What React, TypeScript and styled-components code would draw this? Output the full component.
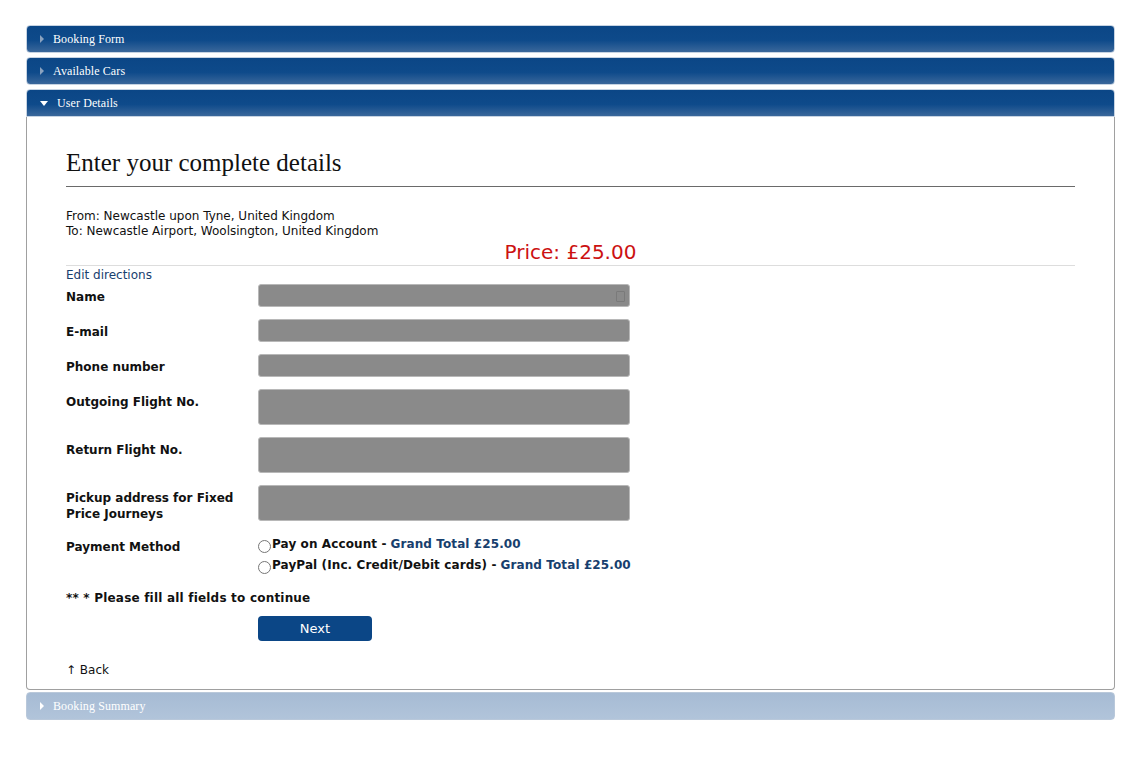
import styled, { createGlobalStyle } from "styled-components";

const GlobalStyle = createGlobalStyle`
  body {
    margin: 0;
    background: #ffffff;
    font-family: "DejaVu Sans", Verdana, sans-serif;
  }
`;

const Page = styled.div`
  padding: 25px 25px 0 26px;
  width: 1089px;
  display: flex;
  flex-direction: column;
`;

const Header = styled.div<{ $open?: boolean; $muted?: boolean }>`
  height: 28px;
  box-sizing: border-box;
  display: flex;
  align-items: center;
  gap: 9px;
  padding-left: 13px;
  margin-bottom: ${(p) => (p.$open ? "0" : "4px")};
  border-radius: ${(p) => (p.$open ? "4px 4px 0 0" : "4px")};
  border: 1px solid ${(p) => (p.$muted ? "#b9c8da" : "#c6d3e2")};
  background: ${(p) =>
    p.$muted
      ? "linear-gradient(#a6bbd4, #b1c4da)"
      : "linear-gradient(#0b4686 0%, #0e4a8a 55%, #3a679b 100%)"};
  color: #ffffff;
  font-family: "Liberation Serif", "Times New Roman", serif;
  font-size: 12px;
  letter-spacing: 0.1px;
`;

const Arrow = styled.span<{ $down?: boolean; $muted?: boolean }>`
  width: 0;
  height: 0;
  ${(p) =>
    p.$down
      ? `border-left: 4px solid transparent;
         border-right: 4px solid transparent;
         border-top: 5px solid #ffffff;`
      : `border-top: 4px solid transparent;
         border-bottom: 4px solid transparent;
         border-left: 4px solid ${p.$muted ? "#ffffff" : "#8aa2bf"};`}
`;

const Panel = styled.div`
  border: 1px solid #a0a0a0;
  border-top: none;
  border-radius: 0 0 4px 4px;
  padding: 30px 39px 11px 39px;
  margin-bottom: 2px;
`;

const Title = styled.h2`
  margin: 0;
  font-family: "Liberation Serif", "Times New Roman", serif;
  font-weight: normal;
  font-size: 25px;
  color: #111111;
  line-height: 32px;
  padding-bottom: 7px;
  border-bottom: 1px solid #6a6a6a;
`;

const Route = styled.div`
  margin-top: 22px;
  font-size: 12px;
  line-height: 15px;
  color: #111111;
`;

const Price = styled.div`
  text-align: center;
  color: #cc1111;
  font-size: 20px;
  line-height: 24px;
  padding-top: 1px;
  padding-bottom: 1px;
  border-bottom: 1px solid #dddddd;
`;

const Link = styled.a`
  display: block;
  color: #17406e;
  font-size: 12px;
  line-height: 16px;
  margin-top: 1px;
  text-decoration: none;
`;

const Form = styled.div`
  display: grid;
  grid-template-columns: 192px 372px;
  row-gap: 12px;
  margin-top: 1px;
`;

const Label = styled.div`
  font-size: 12px;
  font-weight: bold;
  line-height: 16px;
  color: #111111;
  padding-top: 5px;
`;

const Field = styled.div<{ $tall?: boolean }>`
  position: relative;
  height: ${(p) => (p.$tall ? "36px" : "23px")};
  box-sizing: border-box;
  width: 372px;
  background: #8a8a8a;
  border: 1px solid #b8b8b8;
  border-radius: 3px;
`;

const FieldIcon = styled.span`
  position: absolute;
  right: 4px;
  top: 6px;
  width: 7px;
  height: 9px;
  border: 1px solid #7a7a7a;
  border-radius: 1px;
`;

const Options = styled.div`
  display: flex;
  flex-direction: column;
  gap: 4px;
  padding-top: 2px;
`;

const Option = styled.label`
  display: flex;
  align-items: flex-end;
  white-space: nowrap;
  font-size: 12px;
  font-weight: bold;
  line-height: 17px;
  color: #111111;
  letter-spacing: 0.1px;
`;

const Radio = styled.input`
  flex: none;
  margin: 0 1px 0 0;
  width: 13px;
  height: 13px;
`;

const Total = styled.span`
  color: #17406e;
  margin-left: 4px;
`;

const Note = styled.div`
  grid-column: 1 / span 2;
  font-size: 12px;
  font-weight: bold;
  line-height: 16px;
  color: #111111;
  padding-top: 4px;
  letter-spacing: 0.2px;
`;

const NextButton = styled.button`
  grid-column: 2;
  width: 114px;
  height: 25px;
  margin-top: -2px;
  border: none;
  border-radius: 4px;
  background: #0b4686;
  color: #ffffff;
  font-family: "DejaVu Sans", Verdana, sans-serif;
  font-size: 13px;
`;

const Back = styled.div`
  margin-top: 21px;
  font-size: 12px;
  line-height: 16px;
  color: #111111;
`;

const sections = ["Booking Form", "Available Cars"];

const rows: { label: string; tall?: boolean; icon?: boolean }[] = [
  { label: "Name", icon: true },
  { label: "E-mail" },
  { label: "Phone number" },
  { label: "Outgoing Flight No.", tall: true },
  { label: "Return Flight No.", tall: true },
  { label: "Pickup address for Fixed Price Journeys", tall: true },
];

export default function App() {
  return (
    <>
      <GlobalStyle />
      <Page>
        {sections.map((s) => (
          <Header key={s}>
            <Arrow />
            {s}
          </Header>
        ))}
        <Header $open>
          <Arrow $down />
          User Details
        </Header>
        <Panel>
          <Title>Enter your complete details</Title>
          <Route>
            From: Newcastle upon Tyne, United Kingdom
            <br />
            To: Newcastle Airport, Woolsington, United Kingdom
          </Route>
          <Price>Price: £25.00</Price>
          <Link>Edit directions</Link>
          <Form>
            {rows.map((r) => [
              <Label key={r.label + "-l"}>{r.label}</Label>,
              <Field key={r.label + "-f"} $tall={r.tall}>
                {r.icon && <FieldIcon />}
              </Field>,
            ])}
            <Label>Payment Method</Label>
            <Options>
              <Option>
                <Radio type="radio" name="pay" />
                Pay on Account -<Total>Grand Total £25.00</Total>
              </Option>
              <Option>
                <Radio type="radio" name="pay" />
                PayPal (Inc. Credit/Debit cards) -<Total>Grand Total £25.00</Total>
              </Option>
            </Options>
            <Note>** * Please fill all fields to continue</Note>
            <NextButton>Next</NextButton>
          </Form>
          <Back>↑ Back</Back>
        </Panel>
        <Header $muted>
          <Arrow $muted />
          Booking Summary
        </Header>
      </Page>
    </>
  );
}
